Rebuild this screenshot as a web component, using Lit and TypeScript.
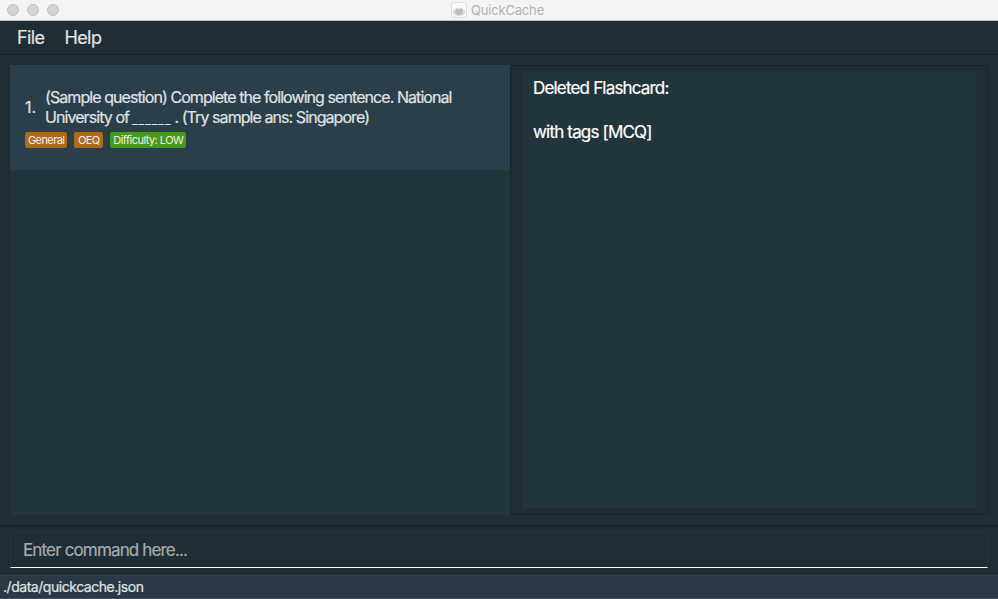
import { LitElement, html, css } from "lit";
import { customElement } from "lit/decorators.js";

@customElement("app-root")
export class AppRoot extends LitElement {
  static styles = css`
    :host {
      display: flex;
      flex-direction: column;
      width: 998px;
      height: 599px;
      overflow: hidden;
      background: #1f2e35;
      font-family: Inter, "Liberation Sans", sans-serif;
      color: #e0e3e5;
      white-space: nowrap;
      -webkit-text-stroke: 0.2px currentColor;
    }
    * { box-sizing: border-box; }
    .titlebar {
      height: 21px;
      flex: none;
      display: grid;
      grid-template-columns: 451px 1fr;
      align-items: center;
      background: #f4f4f4;
      border-bottom: 1px solid #c4c4c4;
    }
    .lights { display: flex; gap: 8px; padding-left: 7px; }
    .light {
      width: 12px;
      height: 12px;
      border-radius: 50%;
      background: #d5d5d5;
      border: 1px solid #c2c2c2;
    }
    .title {
      display: flex;
      align-items: center;
      gap: 4px;
      font-size: 13px;
      line-height: 20px;
      letter-spacing: -0.18px;
      color: #b2b2b2;
      -webkit-text-stroke: 0;
    }
    .logo { display: block; width: 16px; height: 16px; }
    .menubar {
      height: 34px;
      flex: none;
      display: flex;
      gap: 20px;
      padding-left: 17px;
      border-bottom: 1px solid #15242a;
      font-size: 18px;
      line-height: 33px;
      letter-spacing: -0.6px;
    }
    .main {
      height: 470px;
      flex: none;
      display: flex;
      padding: 10px 10px 10px;
    }
    .list { width: 500px; background: #23353c; }
    .card {
      height: 105px;
      padding: 22px 0 0 15px;
      background: #2a3f4a;
    }
    .row {
      display: flex;
      align-items: center;
      font-size: 16px;
      line-height: 20px;
      letter-spacing: -0.93px;
    }
    .index { width: 20px; letter-spacing: 0.1px; }
    .blank {
      font-size: 12px;
      line-height: 1;
      letter-spacing: 1.1px;
      vertical-align: -1px;
      margin: 0 -0.6px;
    }
    .tags { display: flex; gap: 7px; margin-top: 5px; }
    .tag {
      height: 16px;
      min-width: 29px;
      padding: 0 3px;
      border-radius: 2px;
      background: #ad6a17;
      color: #f3efe8;
      font-size: 11px;
      line-height: 16px;
      letter-spacing: -0.6px;
      text-align: center;
      -webkit-text-stroke: 0;
    }
    .tag.low { background: #479b1b; letter-spacing: -0.53px; }
    .result {
      width: 478px;
      border: 1px solid #15242a;
      padding: 6px 11px;
    }
    .output {
      height: 436px;
      background: #23353c;
      padding: 5px 11px;
      color: #fff;
      font-size: 17px;
      line-height: 22px;
      letter-spacing: -0.82px;
      white-space: pre;
    }
    .command {
      height: 48px;
      flex: none;
      border-top: 2px solid #15242a;
      padding: 5px 10px 0;
    }
    .field {
      height: 36px;
      border: 1px solid #23353c;
      border-bottom-color: #fff;
      padding-left: 12px;
      font-size: 17px;
      line-height: 35px;
      letter-spacing: -0.85px;
      color: #a5abad;
    }
    .status {
      height: 26px;
      flex: none;
      border-top: 1px solid #15242a;
      border-bottom: 1px solid #405160;
      background: #293a45;
      padding-left: 3px;
      font-size: 14px;
      line-height: 26px;
      letter-spacing: -0.46px;
    }
  `;

  render() {
    return html`
      <header class="titlebar">
        <div class="lights">
          <span class="light"></span><span class="light"></span><span class="light"></span>
        </div>
        <div class="title">
          <svg class="logo" viewBox="0 0 16 16">
            <rect x=".5" y=".5" width="15" height="15" rx="3" fill="#fafafa" stroke="#dadada" />
            <path d="M2 8l2 .3L4.500 6.500 6.500 7.500 8 6.800l1.500.7 2-1 .5 1.800L14 8v3l-2 2-3 1H7l-3-1-2-2z" fill="#d6d6d6" />
            <path d="M5 6l2 1 1-.8 1 .8 2-1 .5 3-1 3L8 13l-2.500-1-1-3z" fill="#bcbcbc" />
          </svg>
          <span>QuickCache</span>
        </div>
      </header>
      <nav class="menubar"><span>File</span><span>Help</span></nav>
      <main class="main">
        <section class="list">
          <article class="card">
            <div class="row">
              <span class="index">1.</span>
              <span class="question">(Sample question) Complete the following sentence. National<br />University of <span class="blank">______</span> . (Try sample ans: Singapore)</span>
            </div>
            <div class="tags">
              <span class="tag">General</span><span class="tag">OEQ</span><span class="tag low">Difficulty: LOW</span>
            </div>
          </article>
        </section>
        <section class="result"><div class="output">${"Deleted Flashcard:\n\nwith tags [MCQ]"}</div></section>
      </main>
      <div class="command"><div class="field">Enter command here...</div></div>
      <footer class="status">./data/quickcache.json</footer>
    `;
  }
}
